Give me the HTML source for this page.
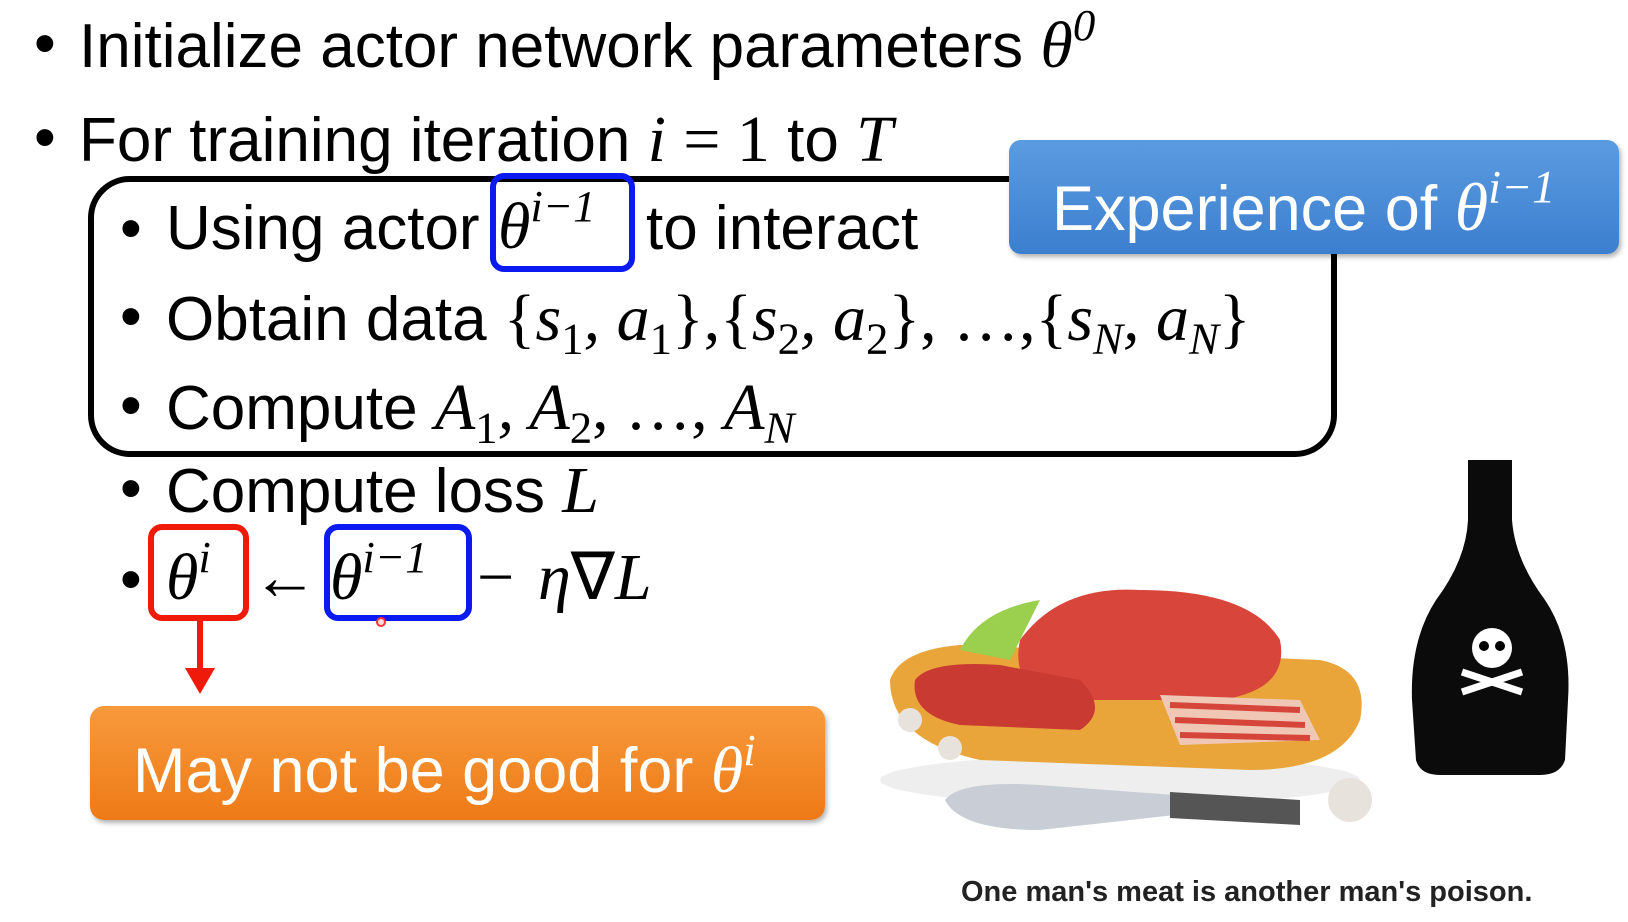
<!DOCTYPE html>
<html><head><meta charset="utf-8"><style>
html,body{margin:0;padding:0;background:#fff;width:1628px;height:922px;overflow:hidden;position:relative}
.t{position:absolute;font-family:"Liberation Sans",sans-serif;font-size:62px;color:#000;white-space:nowrap;line-height:1}
.m{font-family:"Liberation Serif",serif;font-style:italic;font-size:66px}
.r{font-family:"Liberation Serif",serif;font-size:66px}
sup{font-size:0.68em;vertical-align:0.6em;line-height:0}
sub{font-size:0.68em;vertical-align:-0.3em;line-height:0;font-style:normal}
sub.i{font-style:italic}
.b{position:absolute;box-sizing:border-box}
</style></head><body>
<div class="t" style="left:34px;top:13px">•</div>
<div class="t" style="left:79px;top:13px">Initialize actor network parameters <span class="m">θ<sup>0</sup></span></div>
<div class="t" style="left:34px;top:107px">•</div>
<div class="t" style="left:79px;top:107px">For training iteration <span class="m">i</span> <span class="r">= 1</span> to <span class="m">T</span></div>

<div class="b" style="left:88px;top:176px;width:1249px;height:281px;border:6px solid #000;border-radius:42px"></div>

<div class="b" style="left:1009px;top:140px;width:610px;height:114px;border-radius:12px;background:linear-gradient(#5b9be0,#3c7fcf);box-shadow:2px 3px 5px rgba(0,0,0,.3)"></div>
<div class="t" style="left:1052px;top:173px;color:#fff;font-size:63px">Experience of <span class="m" style="font-size:68px">θ<sup>i−1</sup></span></div>

<div class="t" style="left:120px;top:198px">•</div>
<div class="t" style="left:166px;top:198px">Using actor</div>
<div class="t m" style="left:498px;top:194px">θ<sup>i−1</sup></div>
<div class="t" style="left:646px;top:198px">to interact</div>
<div class="b" style="left:490px;top:173px;width:145px;height:99px;border:6px solid #0a1af0;border-radius:14px"></div>
<div class="t" style="left:120px;top:286px">•</div>
<div class="t" style="left:166px;top:286px">Obtain data <span class="r">{</span><span class="m">s<sub>1</sub>, a<sub>1</sub></span><span class="r">},{</span><span class="m">s<sub>2</sub>, a<sub>2</sub></span><span class="r">}, …,{</span><span class="m">s<sub class="i">N</sub>, a<sub class="i">N</sub></span><span class="r">}</span></div>
<div class="t" style="left:120px;top:375px">•</div>
<div class="t" style="left:166px;top:375px">Compute <span class="m">A<sub>1</sub>, A<sub>2</sub></span><span class="r">, …, </span><span class="m">A<sub class="i">N</sub></span></div>
<div class="t" style="left:120px;top:458px">•</div>
<div class="t" style="left:166px;top:458px">Compute loss <span class="m">L</span></div>
<div class="t" style="left:120px;top:549px">•</div>
<div class="t m" style="left:166px;top:545px">θ<sup>i</sup></div>
<div class="t r" style="left:252px;top:545px">←</div>
<div class="t m" style="left:330px;top:545px">θ<sup>i−1</sup></div>
<div class="t r" style="left:477px;top:545px">−</div>
<div class="t m" style="left:538px;top:545px">η<span style="font-style:normal">∇</span>L</div>
<div class="b" style="left:148px;top:524px;width:101px;height:97px;border:6px solid #f01a0a;border-radius:14px"></div>
<div class="b" style="left:324px;top:524px;width:148px;height:97px;border:6px solid #0a1af0;border-radius:14px"></div>
<div class="b" style="left:376px;top:617px;width:10px;height:10px;border:2px solid #f33;border-radius:50%;background:#fdd"></div>
<div class="b" style="left:197px;top:621px;width:6px;height:52px;background:#f01a0a"></div>
<div class="b" style="left:185px;top:668px;width:0;height:0;border-left:15px solid transparent;border-right:15px solid transparent;border-top:26px solid #f01a0a"></div>

<div class="b" style="left:90px;top:706px;width:735px;height:114px;border-radius:14px;background:linear-gradient(#f79a3c,#ee7a16);box-shadow:2px 3px 5px rgba(0,0,0,.3)"></div>
<div class="t" style="left:133px;top:738px;color:#fff;font-size:63px">May not be good for <span class="m">θ<sup>i</sup></span></div>

<svg class="b" style="left:880px;top:450px" width="720" height="400" viewBox="880 450 720 400">
<ellipse cx="1120" cy="780" rx="240" ry="25" fill="#ddd" opacity=".5"/>
<path d="M890 680 Q900 650 960 645 L1320 660 Q1370 670 1360 720 Q1340 770 1250 770 L980 760 Q890 740 890 680Z" fill="#e9a53a"/>
<path d="M960 650 Q980 610 1040 600 L1010 660Z" fill="#9bcf4e"/>
<path d="M1020 640 Q1060 585 1140 590 Q1250 590 1280 640 Q1290 690 1220 700 L1060 700 Q1010 690 1020 640Z" fill="#d8453a"/>
<path d="M915 680 Q930 660 1000 665 L1080 680 Q1110 710 1080 730 L960 725 Q910 715 915 680Z" fill="#c93a33"/>
<path d="M1160 695 L1300 700 L1320 740 L1180 745Z" fill="#f0c7b5"/>
<path d="M1170 705 L1300 710 M1175 720 L1305 725 M1180 735 L1310 738" stroke="#d6453a" stroke-width="6"/>
<path d="M945 800 Q960 780 1040 785 L1175 795 L1175 815 L1040 830 Q960 830 945 800Z" fill="#c9ced6"/>
<path d="M1170 792 L1300 800 L1300 825 L1170 818Z" fill="#555"/>
<circle cx="1350" cy="800" r="22" fill="#e8e2dc"/>
<circle cx="910" cy="720" r="12" fill="#e8e2dc"/>
<circle cx="950" cy="748" r="12" fill="#e8e2dc"/>
<path d="M1468 460 L1512 460 L1512 520 Q1515 560 1545 600 Q1572 640 1568 700 L1565 760 Q1560 775 1540 775 L1440 775 Q1420 775 1416 760 L1412 700 Q1410 640 1436 600 Q1466 560 1468 520Z" fill="#0b0b0b"/>
<circle cx="1492" cy="648" r="20" fill="#fff"/>
<circle cx="1484" cy="646" r="5" fill="#000"/><circle cx="1500" cy="646" r="5" fill="#000"/>
<path d="M1462 672 L1522 692 M1522 672 L1462 692" stroke="#fff" stroke-width="7"/>
</svg>
<div class="b" style="left:961px;top:876px;font-family:'Liberation Sans',sans-serif;font-size:29px;font-weight:bold;color:#222;white-space:nowrap;letter-spacing:0px">One man's meat is another man's poison.</div>
</body></html>
